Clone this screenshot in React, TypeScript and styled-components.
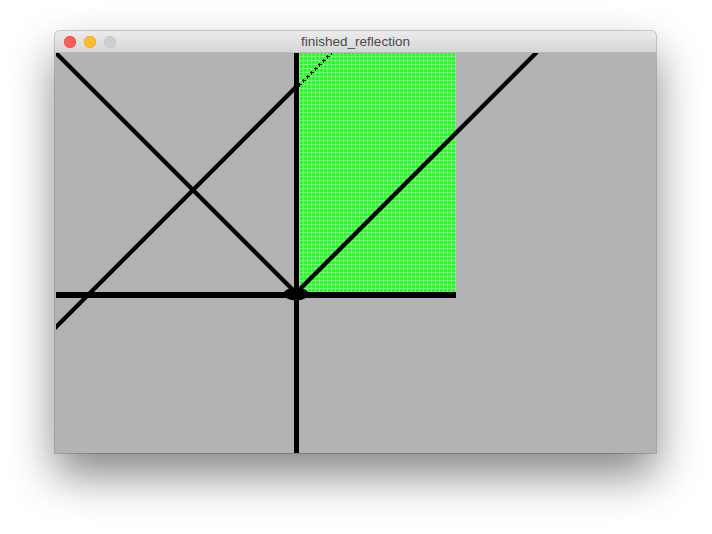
import React from "react";
import styled, { createGlobalStyle } from "styled-components";

const Global = createGlobalStyle`
  html, body { margin: 0; padding: 0; background: #ffffff; }
  body { width: 712px; height: 534px; overflow: hidden; font-family: "Liberation Sans", Arial, sans-serif; }
`;

const Page = styled.div`
  padding: 31px 0 0 55px;
`;

const Window = styled.div`
  width: 601px;
  border-radius: 5px 5px 0 0;
  overflow: hidden;
  box-shadow: 0 22px 45px rgba(0, 0, 0, 0.48), 0 0 0 1px rgba(0, 0, 0, 0.18);
  background: #b3b3b3;
`;

const TitleBar = styled.div`
  height: 22px;
  display: flex;
  align-items: center;
  position: relative;
  background: linear-gradient(#ececec, #d6d6d6);
  border-bottom: 1px solid #b9b9b9;
  box-sizing: border-box;
  padding-left: 9px;
  gap: 8px;
`;

const Light = styled.span<{ $c: string; $b: string }>`
  width: 12px;
  height: 12px;
  border-radius: 50%;
  background: ${(p) => p.$c};
  box-shadow: inset 0 0 0 0.5px ${(p) => p.$b};
`;

const Title = styled.div`
  position: absolute;
  left: 0;
  right: 0;
  top: 0;
  height: 22px;
  line-height: 22px;
  text-align: center;
  font-size: 13.5px;
  color: #4a4a4a;
  pointer-events: none;
`;

const Canvas = styled.svg`
  display: block;
  margin-left: 1px;
`;

const marks: React.ReactElement[] = [];
for (let i = 0; i < 9; i++) {
  const x = 243 + i * 4;
  const y = 31 - i * 4;
  marks.push(
    <g key={i} stroke="#000" strokeWidth={1} shapeRendering="crispEdges">
      <line x1={x - 1.5} y1={y + 0.5} x2={x + 2.5} y2={y + 0.5} />
      <line x1={x + 0.5} y1={y - 1.5} x2={x + 0.5} y2={y + 2.5} />
    </g>
  );
}

export default function App() {
  return (
    <>
      <Global />
      <Page>
        <Window>
          <TitleBar>
            <Light $c="#fc5f57" $b="#e0443e" />
            <Light $c="#fdbc2e" $b="#dea123" />
            <Light $c="#cfcfcf" $b="#c0c0c0" />
            <Title>finished_reflection</Title>
          </TitleBar>
          <Canvas width={600} height={400} viewBox="0 0 600 400">
            <defs>
              <pattern id="g" width="4" height="4" patternUnits="userSpaceOnUse">
                <rect width="4" height="4" fill="#22ff22" />
                <rect x="3" y="0" width="1" height="4" fill="#7ef07e" />
                <rect x="0" y="3" width="4" height="1" fill="#7ef07e" />
                <rect x="3" y="3" width="1" height="1" fill="#c4c4c4" />
              </pattern>
            </defs>
            <rect width="600" height="400" fill="#b3b3b3" />
            <rect x="242" y="0" width="158" height="239" fill="url(#g)" />
            {marks}
            <g stroke="#000" strokeWidth={4.2} fill="none">
              <line x1={0} y1={0} x2={240} y2={240} />
              <line x1={240} y1={240} x2={481} y2={-1} />
              <line x1={-2} y1={276} x2={240} y2={34} />
            </g>
            <rect x="238" y="0" width="5" height="400" fill="#000" />
            <rect x="0" y="239" width="400" height="6" fill="#000" />
            <ellipse cx="240" cy="241" rx="12.5" ry="6.5" fill="#000" />
          </Canvas>
        </Window>
      </Page>
    </>
  );
}
